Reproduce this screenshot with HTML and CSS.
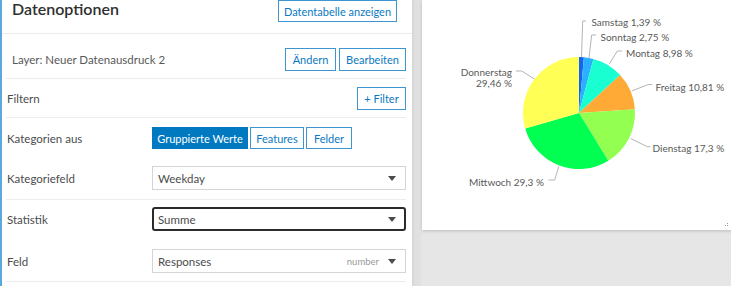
FILE: index.html
```html
<!DOCTYPE html>
<html>
  <head>
    <title>Datenoptionen</title>
    <link rel="stylesheet" href="styles.css">
  </head>
  <body>
    <div id="options-panel">
      <div class="panel-header">
        <h2>Datenoptionen</h2>
        <button class="btn">Datentabelle anzeigen</button>
      </div>

      <!-- Layer -->
      <div class="section">
        <div class="row layer-row">
          <span class="layer-name">Layer: Neuer Datenausdruck 2</span>
          <div class="btn-group">
            <button class="btn">Ändern</button>
            <button class="btn">Bearbeiten</button>
          </div>
        </div>
      </div>

      <!-- Filter -->
      <div class="section">
        <div class="row filter-row">
          <span class="label">Filtern</span>
          <button class="btn">+ Filter</button>
        </div>
      </div>

      <!-- Kategorien -->
      <div class="section">
        <div class="group cat-group">
          <div class="field">
            <span class="label">Kategorien aus</span>
            <div class="segments">
              <button class="btn seg active">Gruppierte Werte</button>
              <button class="btn seg">Features</button>
              <button class="btn seg">Felder</button>
            </div>
          </div>
          <div class="field">
            <span class="label">Kategoriefeld</span>
            <div class="select">
              <span>Weekday</span>
              <span class="arrow"></span>
            </div>
          </div>
        </div>
      </div>

      <!-- Statistik -->
      <div class="section">
        <div class="group stat-group">
          <div class="field">
            <span class="label">Statistik</span>
            <div class="select focused">
              <span>Summe</span>
              <span class="arrow"></span>
            </div>
          </div>
          <div class="field">
            <span class="label">Feld</span>
            <div class="select">
              <span>Responses</span>
              <span class="type">number</span>
              <span class="arrow"></span>
            </div>
          </div>
        </div>
      </div>
    </div>

    <div id="preview">
      <div class="chart-card">
        <svg class="pie" width="320" height="230" viewBox="0 0 320 230">
          <!-- slices, clockwise from top -->
          <path d="M157 113 L157 57 A56 56 0 0 1 161.88 57.21 Z" fill="#1464f0"/>
          <path d="M157 113 L161.88 57.21 A56 56 0 0 1 171.40 58.88 Z" fill="#2bb0ff"/>
          <path d="M157 113 L171.40 58.88 A56 56 0 0 1 198.11 74.97 Z" fill="#1affd2"/>
          <path d="M157 113 L198.11 74.97 A56 56 0 0 1 212.87 109.24 Z" fill="#ffaa36"/>
          <path d="M157 113 L212.87 109.24 A56 56 0 0 1 186.32 160.71 Z" fill="#93ff50"/>
          <path d="M157 113 L186.32 160.71 A56 56 0 0 1 103.20 128.52 Z" fill="#00ff50"/>
          <path d="M157 113 L103.20 128.52 A56 56 0 0 1 157 57 Z" fill="#ffff55"/>

          <!-- leader lines -->
          <g class="leaders">
            <polyline points="159.5,57 160.7,21 164,21"/>
            <polyline points="167,58 169.7,35 174,35"/>
            <polyline points="187.3,64 195.3,51 200,51"/>
            <polyline points="209.7,91 226.3,84.5 230.3,84.5"/>
            <polyline points="208.7,138.5 225.3,146.7 228.5,146.7"/>
            <polyline points="136.7,166.7 132.7,180 126.3,180"/>
            <polyline points="112.3,79 99.7,71 94,71"/>
          </g>

          <g class="labels">
            <text x="169.5" y="26">Samstag 1,39 %</text>
            <text x="178.5" y="41">Sonntag 2,75 %</text>
            <text x="204" y="57">Montag 8,98 %</text>
            <text x="233.5" y="91">Freitag 10,81 %</text>
            <text x="230.5" y="152">Dienstag 17,3 %</text>
            <text x="122" y="185.5" text-anchor="end">Mittwoch 29,3 %</text>
            <text x="90" y="76" text-anchor="end">Donnerstag</text>
            <text x="90" y="87" text-anchor="end">29,46 %</text>
          </g>

          <!-- resize grip -->
          <g fill="#9a9a9a">
            <rect x="303" y="225" width="1" height="1"/>
            <rect x="305" y="223" width="1" height="1"/>
            <rect x="305" y="225" width="1" height="1"/>
          </g>
        </svg>
      </div>
    </div>
  </body>
</html>
```

FILE: styles.css
```css
body {
  font-family: Lato, "Open Sans", sans-serif;
  margin: 0;
  padding: 0;
  display: flex;
  height: 286px;
  overflow: hidden;
  background-color: #e6e6e6;
  color: #4c4c4c;
}

/* Left options panel */
#options-panel {
  width: 410px;
  flex-shrink: 0;
  background-color: #fff;
  border-left: 2px solid #5aa8dc;
}

.panel-header {
  height: 33px;
  display: flex;
  justify-content: space-between;
  align-items: flex-start;
  padding: 0 15px 0 10px;
  border-bottom: 1px solid #ececec;
}

.panel-header h2 {
  margin: 0;
  font-size: 16px;
  font-weight: 600;
  line-height: 18px;
  color: #2f2f2f;
}

.btn {
  font-family: inherit;
  font-size: 11px;
  height: 23px;
  padding: 0;
  background-color: #fff;
  color: #0a79bf;
  border: 1px solid #3f95cf;
  border-radius: 0;
  cursor: pointer;
  white-space: nowrap;
}

.panel-header .btn {
  width: 119px;
  height: 22px;
}

.section {
  padding: 0 6px 0 4px;
}

.row {
  display: flex;
  justify-content: space-between;
  align-items: center;
  border-bottom: 1px solid #ececec;
}

.layer-row {
  padding: 14px 0 7px 6px;
}

.layer-name {
  font-size: 11.5px;
  color: #595959;
}

.btn-group {
  display: flex;
  gap: 3px;
}

.btn-group .btn:first-child {
  width: 51px;
}

.btn-group .btn:last-child {
  width: 67px;
}

.filter-row {
  padding: 8px 0 7px 1px;
}

.filter-row .btn {
  width: 49px;
}

.label {
  font-size: 11.5px;
  color: #4c4c4c;
}

/* Field groups */
.group {
  display: flex;
  flex-direction: column;
  border-bottom: 1px solid #ececec;
}

.cat-group {
  padding: 9px 0 9px 1px;
  gap: 17px;
}

.stat-group {
  padding: 7px 0 8px 1px;
  gap: 18px;
}

.field {
  display: flex;
  align-items: center;
}

.field .label {
  width: 145px;
  flex-shrink: 0;
}

.segments {
  display: flex;
  gap: 2px;
}

.seg {
  height: 22px;
}

.seg:nth-child(1) {
  width: 96px;
}

.seg:nth-child(2) {
  width: 54px;
}

.seg:nth-child(3) {
  width: 46px;
}

.seg.active {
  background-color: #0079c1;
  border-color: #0079c1;
  color: #fff;
}

.select {
  flex: 1;
  height: 24px;
  box-sizing: border-box;
  display: flex;
  align-items: center;
  padding: 0 9px 0 5px;
  border: 1px solid #d4d4d4;
  font-size: 11.5px;
  color: #4c4c4c;
}

.select.focused {
  border: 2px solid #2b2b2b;
  border-radius: 3px;
  padding-left: 4px;
  padding-right: 8px;
}

.select .type {
  margin-left: auto;
  margin-right: 9px;
  font-size: 9.5px;
  color: #9a9a9a;
}

.select .arrow {
  margin-left: auto;
  width: 0;
  height: 0;
  border-left: 4px solid transparent;
  border-right: 4px solid transparent;
  border-top: 5px solid #4c4c4c;
}

.select .type + .arrow {
  margin-left: 0;
}

/* Right preview area */
#preview {
  flex: 1;
  padding-left: 10px;
  background: linear-gradient(to right, #d2d2d2 0, #dedede 2px, #e2e2e2 9px, #e6e6e6 10px);
}

.chart-card {
  height: 230px;
  background-color: #fff;
  box-shadow: 0 1px 3px rgba(0, 0, 0, 0.18);
}

.pie {
  display: block;
}

.leaders polyline {
  fill: none;
  stroke: #b5b5b5;
  stroke-width: 1;
}

.labels text {
  font-family: Lato, "Open Sans", sans-serif;
  font-size: 10px;
  fill: #595959;
}
```
